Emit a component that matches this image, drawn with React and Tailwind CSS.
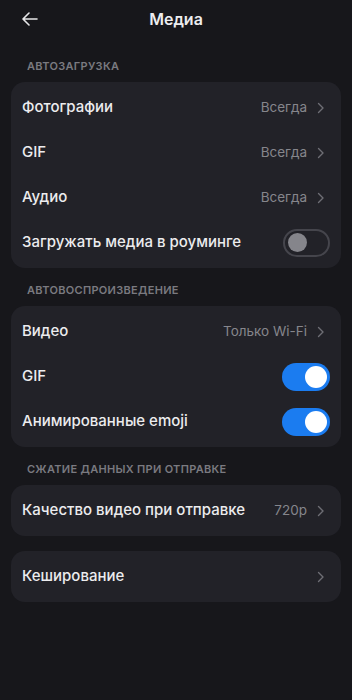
import React, { useState } from 'react';

const Chevron = () => (
  <svg width="8" height="12" viewBox="0 0 8 12" fill="none" className="ml-[10px]">
    <path d="M1.5 1.5L6 6l-4.5 4.5" stroke="#6e6e75" strokeWidth="1.4" strokeLinecap="round" strokeLinejoin="round" />
  </svg>
);

const Toggle = ({ on, onClick }) =>
  on ? (
    <button onClick={onClick} className="w-[48px] h-[28px] rounded-full bg-[#1b7cf0] flex items-center justify-end pr-[3px]">
      <span className="w-[22px] h-[22px] rounded-full bg-white block" />
    </button>
  ) : (
    <button onClick={onClick} className="w-[47px] h-[28px] rounded-full border-2 border-[#45454c] flex items-center pl-[3px]">
      <span className="w-[19px] h-[19px] rounded-full bg-[#85858b] block" />
    </button>
  );

const Row = ({ label, value, chevron, toggle, onToggle }) => (
  <div className="h-[45px] flex items-center justify-between pl-[11px] pr-[16px]">
    <span className="text-[15px] font-medium text-[#ececee]">{label}</span>
    <div className="flex items-center">
      {value && <span className="text-[13.5px] text-[#86868c]">{value}</span>}
      {chevron && <Chevron />}
      {toggle !== undefined && (
        <div className="-mr-[5px]">
          <Toggle on={toggle} onClick={onToggle} />
        </div>
      )}
    </div>
  </div>
);

const Label = ({ children, first }) => (
  <div className={`${first ? 'pt-[20px]' : 'pt-[14px]'} pb-[8px] pl-[27px] text-[11px] leading-[16px] font-semibold tracking-[0.3px] text-[#7a7a80]`}>
    {children}
  </div>
);

const Card = ({ children }) => (
  <div className="mx-[11px] rounded-[14px] bg-[#222228] py-[3px]">{children}</div>
);

export default function App() {
  const [roaming, setRoaming] = useState(false);
  const [gif, setGif] = useState(true);
  const [emoji, setEmoji] = useState(true);

  return (
    <div className="w-[352px] h-[700px] bg-[#17171b] overflow-hidden" style={{ fontFamily: 'Inter, "Noto Sans", sans-serif' }}>
      <div className="h-[38px] relative flex items-center justify-center">
        <svg width="16" height="14" viewBox="0 0 16 14" fill="none" className="absolute left-[22px] top-[12px]">
          <path d="M15 7H1.5M7 1L1 7l6 6" stroke="#e6e6e8" strokeWidth="1.6" strokeLinecap="round" strokeLinejoin="round" />
        </svg>
        <span className="text-[16px] font-semibold text-[#ededef]">Медиа</span>
      </div>

      <Label first>АВТОЗАГРУЗКА</Label>
      <Card>
        <Row label="Фотографии" value="Всегда" chevron />
        <Row label="GIF" value="Всегда" chevron />
        <Row label="Аудио" value="Всегда" chevron />
        <Row label="Загружать медиа в роуминге" toggle={roaming} onToggle={() => setRoaming(!roaming)} />
      </Card>

      <Label>АВТОВОСПРОИЗВЕДЕНИЕ</Label>
      <Card>
        <Row label="Видео" value="Только Wi-Fi" chevron />
        <Row label="GIF" toggle={gif} onToggle={() => setGif(!gif)} />
        <Row label="Анимированные emoji" toggle={emoji} onToggle={() => setEmoji(!emoji)} />
      </Card>

      <Label>СЖАТИЕ ДАННЫХ ПРИ ОТПРАВКЕ</Label>
      <Card>
        <Row label="Качество видео при отправке" value="720p" chevron />
      </Card>

      <div className="h-[15px]" />
      <Card>
        <Row label="Кеширование" chevron />
      </Card>
    </div>
  );
}
